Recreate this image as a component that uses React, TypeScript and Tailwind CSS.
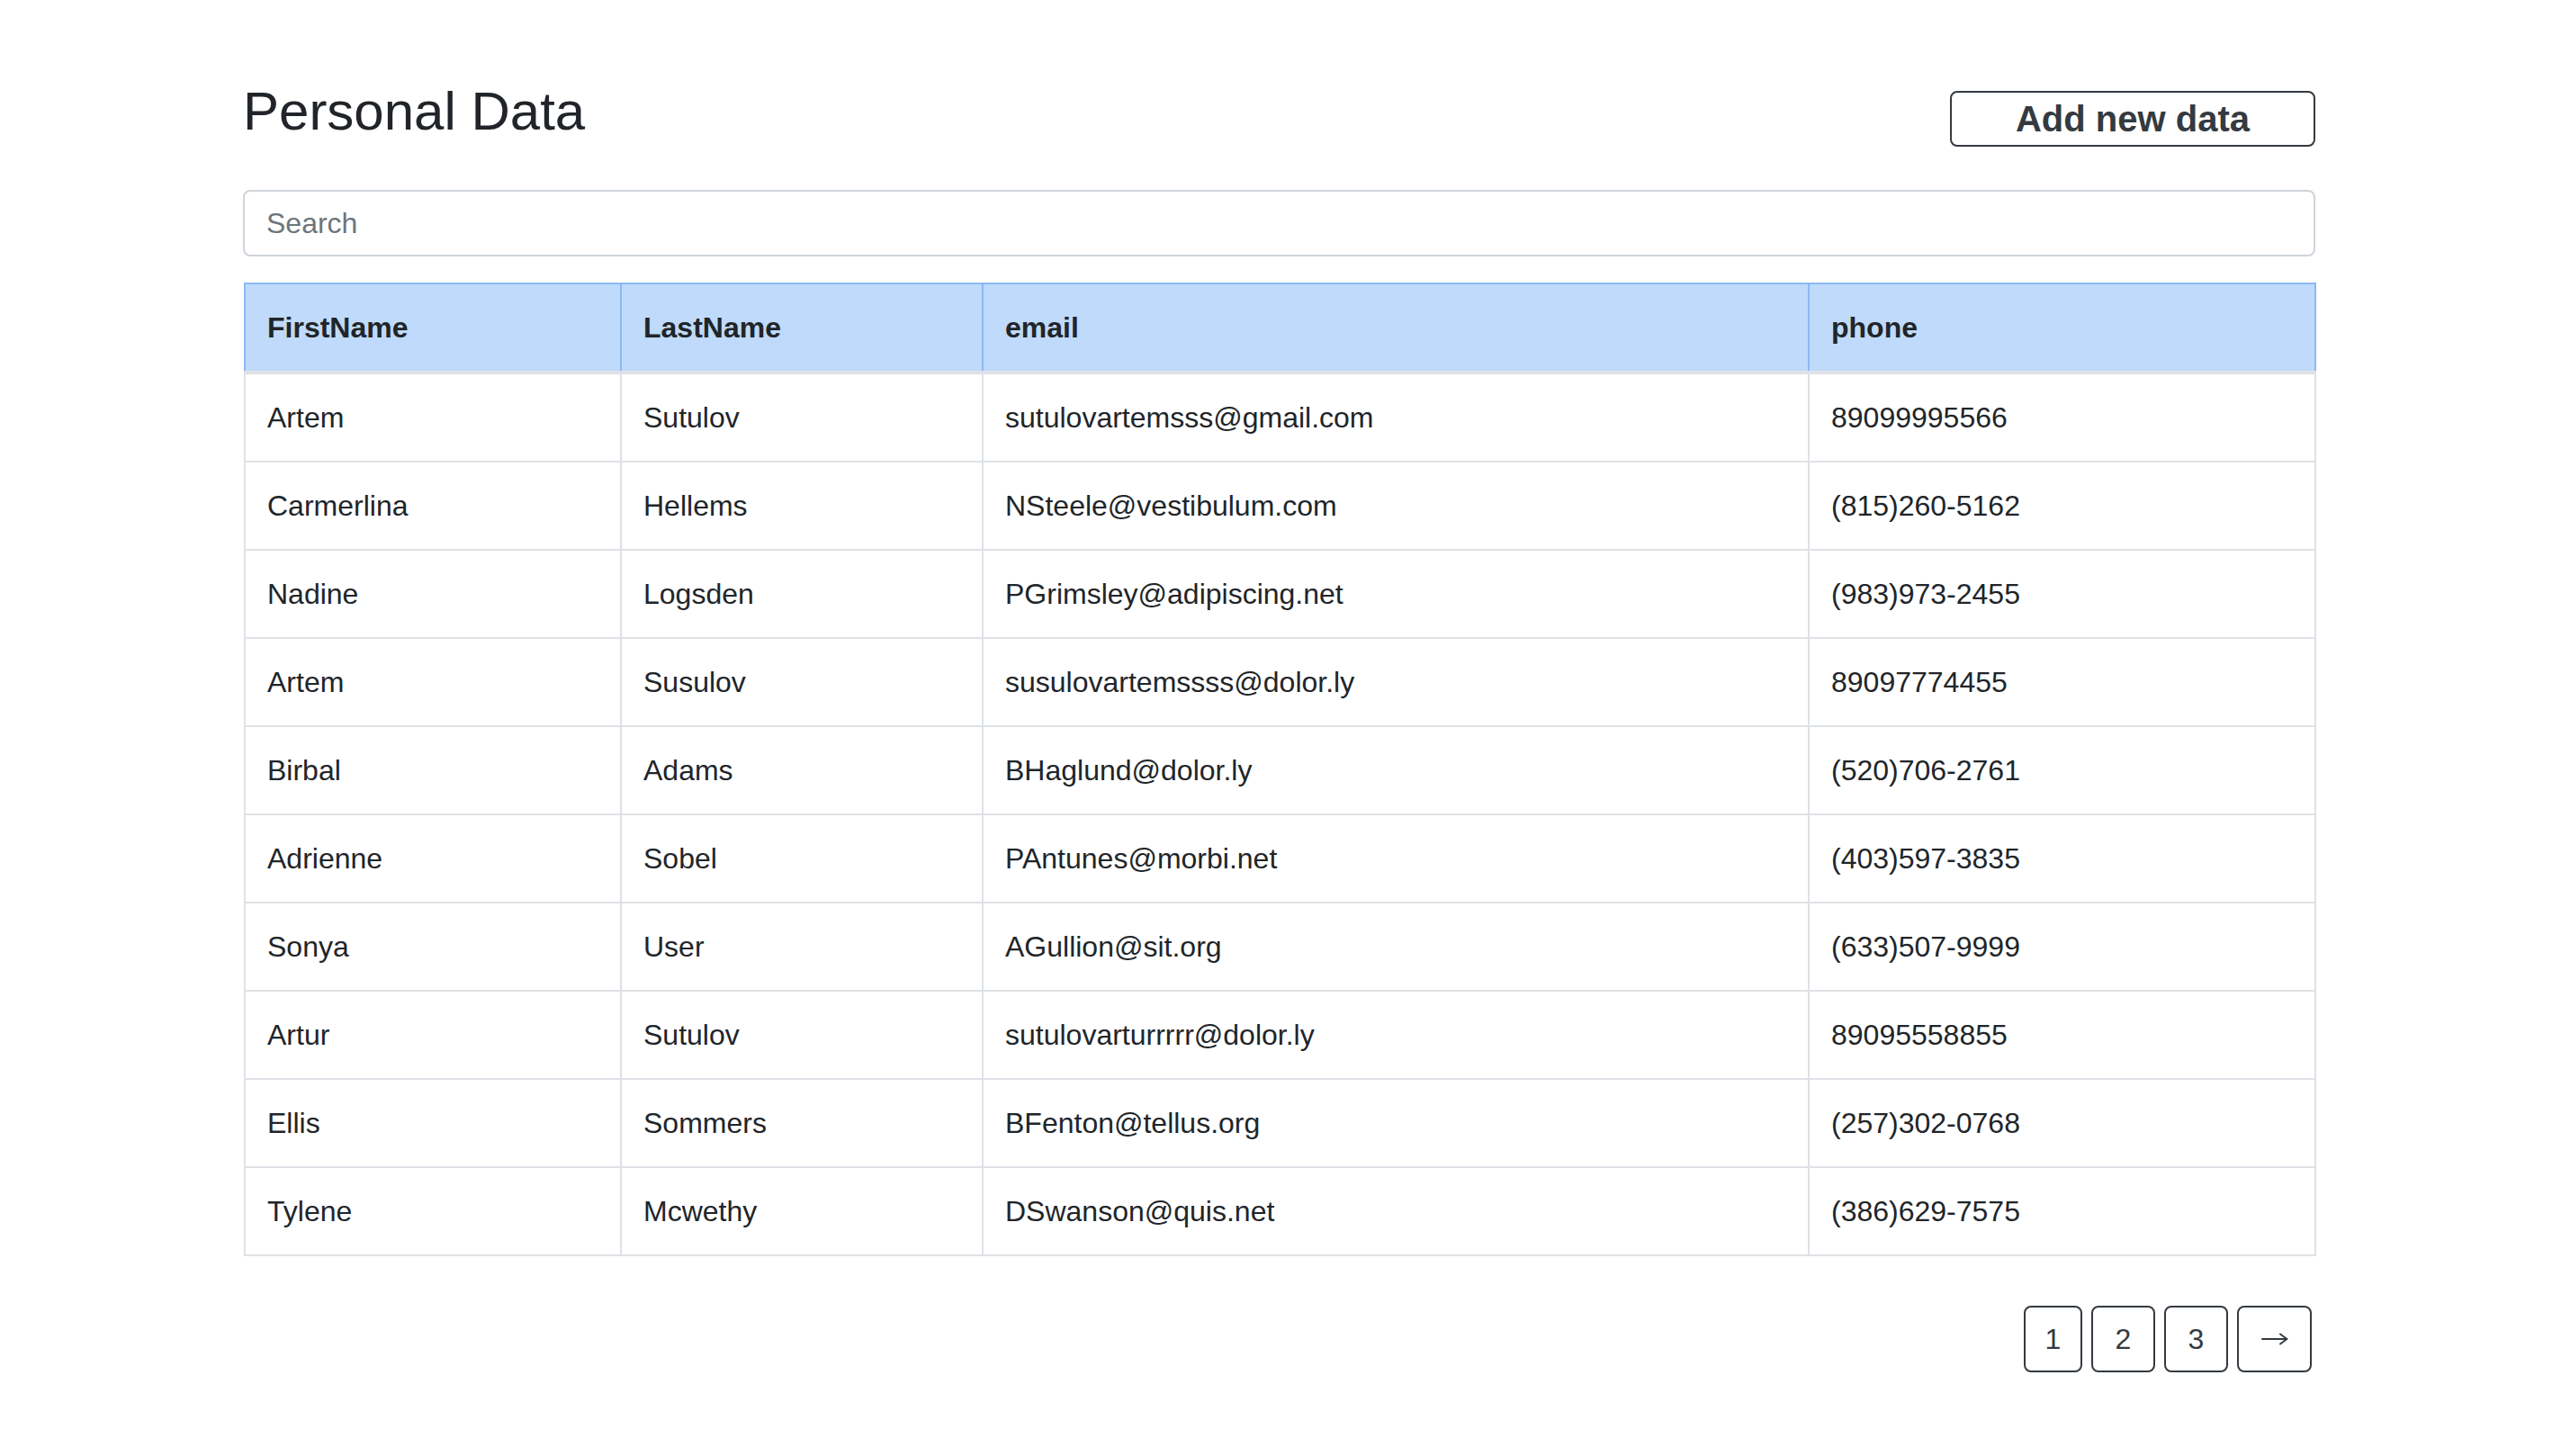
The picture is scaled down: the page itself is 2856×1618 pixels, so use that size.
import { useState } from 'react';

const PEOPLE = [
  { first: 'Artem', last: 'Sutulov', email: 'sutulovartemsss@gmail.com', phone: '89099995566' },
  { first: 'Carmerlina', last: 'Hellems', email: 'NSteele@vestibulum.com', phone: '(815)260-5162' },
  { first: 'Nadine', last: 'Logsden', email: 'PGrimsley@adipiscing.net', phone: '(983)973-2455' },
  { first: 'Artem', last: 'Susulov', email: 'susulovartemssss@dolor.ly', phone: '89097774455' },
  { first: 'Birbal', last: 'Adams', email: 'BHaglund@dolor.ly', phone: '(520)706-2761' },
  { first: 'Adrienne', last: 'Sobel', email: 'PAntunes@morbi.net', phone: '(403)597-3835' },
  { first: 'Sonya', last: 'User', email: 'AGullion@sit.org', phone: '(633)507-9999' },
  { first: 'Artur', last: 'Sutulov', email: 'sutulovarturrrrr@dolor.ly', phone: '89095558855' },
  { first: 'Ellis', last: 'Sommers', email: 'BFenton@tellus.org', phone: '(257)302-0768' },
  { first: 'Tylene', last: 'Mcwethy', email: 'DSwanson@quis.net', phone: '(386)629-7575' },
];

const NextArrow = () => (
  <svg width="30" height="16" viewBox="0 0 30 16" fill="none" className="mx-auto">
    <path d="M1 8H28M21 2.5L28.5 8L21 13.5" stroke="#343a40" strokeWidth="2" strokeLinecap="round" strokeLinejoin="round" />
  </svg>
);

const PAGES = [
  { key: '1', label: '1', cls: 'w-[65px]' },
  { key: '2', label: '2', cls: 'w-[71px]' },
  { key: '3', label: '3', cls: 'w-[71px]' },
  { key: 'next', label: <NextArrow />, cls: 'w-[83px] flex items-center justify-center' },
];

export default function App() {
  const [query, setQuery] = useState('');

  const rows = PEOPLE.filter((p) =>
    `${p.first} ${p.last} ${p.email} ${p.phone}`.toLowerCase().includes(query.toLowerCase())
  );

  return (
    <div className="min-h-screen bg-white text-[#212529] font-['Liberation_Sans',Arial,sans-serif]">
      <div className="ml-[270px] w-[2303px] pt-[87px]">
        <div className="flex items-start justify-between">
          <h1 className="text-[60px] leading-[74px] font-normal">Personal Data</h1>
          <button className="mt-[14px] w-[406px] h-[62px] border-2 border-[#343a40] rounded-[8px] text-[40px] leading-[58px] font-bold text-[#343a40]">
            Add new data
          </button>
        </div>

        <input
          value={query}
          onChange={(e) => setQuery(e.target.value)}
          placeholder="Search"
          className="mt-[48px] block w-full h-[74px] px-[24px] border-2 border-[#ced4da] rounded-[8px] text-[32px] leading-[70px] text-[#495057] placeholder:text-[#6c757d] outline-none"
        />

        {/* collapsed outer borders stick out by half, so trim 1px each side */}
        <table className="mt-[29px] ml-[1px] w-[2301px] table-fixed border-collapse text-[32px] leading-[48px]">
          <colgroup>
            <col className="w-[418px]" />
            <col className="w-[402px]" />
            <col className="w-[918px]" />
            <col className="w-[563px]" />
          </colgroup>
          <thead>
            <tr className="bg-[#bfdafa]">
              {['FirstName', 'LastName', 'email', 'phone'].map((h) => (
                <th
                  key={h}
                  className="text-left font-bold px-[24px] py-[24px] border-2 border-[#8ab9f7] border-b-4 border-b-[#dee2e6]"
                >
                  {h}
                </th>
              ))}
            </tr>
          </thead>
          <tbody>
            {rows.map((p, i) => (
              <tr key={i}>
                <td className="px-[24px] py-[24px] border-2 border-[#dee2e6]">{p.first}</td>
                <td className="px-[24px] py-[24px] border-2 border-[#dee2e6]">{p.last}</td>
                <td className="px-[24px] py-[24px] border-2 border-[#dee2e6]">{p.email}</td>
                <td className="px-[24px] py-[24px] border-2 border-[#dee2e6]">{p.phone}</td>
              </tr>
            ))}
          </tbody>
        </table>

        <div className="mt-[55px] flex justify-end gap-[10px] pr-[4px] pb-[80px]">
          {PAGES.map((pg) => (
            <button
              key={pg.key}
              className={`h-[74px] border-2 border-[#343a40] rounded-[8px] text-[32px] leading-[70px] text-[#343a40] ${pg.cls}`}
            >
              {pg.label}
            </button>
          ))}
        </div>
      </div>
    </div>
  );
}
